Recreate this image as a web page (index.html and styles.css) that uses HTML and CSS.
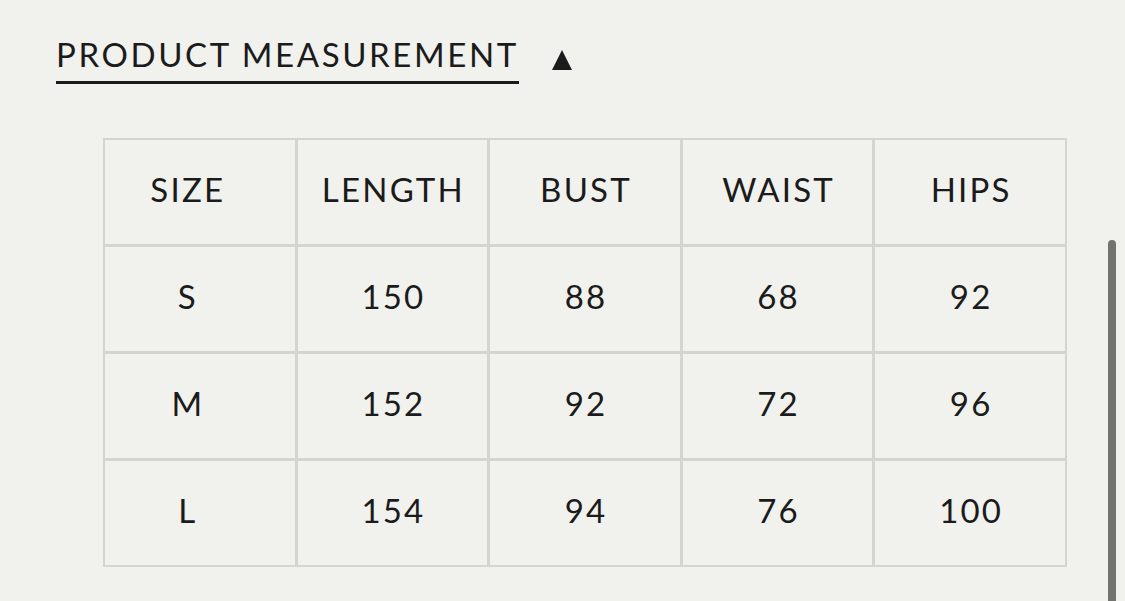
FILE: index.html
```html
<!DOCTYPE html>
<html>
<head>
<meta charset="utf-8">
<link rel="stylesheet" href="styles.css">
</head>
<body>
<div class="page">
  <div class="heading-row">
    <h2 class="heading">PRODUCT MEASUREMENT</h2>
    <svg class="toggle" width="20" height="20" viewBox="0 0 20 20"><polygon points="10,0 20,20 0,20" fill="#1b1b1b"/></svg>
  </div>
  <div class="size-table">
    <div class="cell first">SIZE</div><div class="cell">LENGTH</div><div class="cell">BUST</div><div class="cell">WAIST</div><div class="cell">HIPS</div>
    <div class="cell first">S</div><div class="cell">150</div><div class="cell">88</div><div class="cell">68</div><div class="cell">92</div>
    <div class="cell first">M</div><div class="cell">152</div><div class="cell">92</div><div class="cell">72</div><div class="cell">96</div>
    <div class="cell first">L</div><div class="cell">154</div><div class="cell">94</div><div class="cell">76</div><div class="cell">100</div>
  </div>
</div>
<div class="scrollbar"></div>
</body>
</html>
```
FILE: styles.css
```css
html, body {
  margin: 0;
  padding: 0;
  background: #f1f1ed;
  height: 100%;
  overflow: hidden;
}
body {
  font-family: Lato, "Open Sans", sans-serif;
  color: #1b1b1b;
}
.page {
  padding: 34px 0 0 56px;
}
.heading-row {
  display: flex;
  align-items: flex-start;
  gap: 33px;
}
.heading {
  margin: 0;
  font-weight: 400;
  font-size: 33px;
  line-height: 40px;
  letter-spacing: 2.6px;
  padding-bottom: 7px;
  border-bottom: 3px solid #1b1b1b;
}
.toggle {
  display: block;
  margin-top: 16px;
}
.size-table {
  margin: 54px 0 0 47px;
  width: 964px;
  box-sizing: border-box;
  display: grid;
  grid-template-columns: repeat(5, 1fr);
  grid-auto-rows: 104px;
  gap: 3px;
  padding: 2px;
  background: #d5d5d0;
}
.cell {
  background: #f1f1ed;
  display: flex;
  align-items: center;
  justify-content: center;
  font-size: 33px;
  letter-spacing: 2.2px;
  padding-bottom: 6px;
  padding-left: 2px;
  box-sizing: border-box;
}
.cell.first {
  padding-left: 0;
  padding-right: 24px;
}
.scrollbar {
  position: absolute;
  left: 1108px;
  top: 240px;
  width: 8px;
  height: 380px;
  border-radius: 4px;
  background: #72726e;
}
```
